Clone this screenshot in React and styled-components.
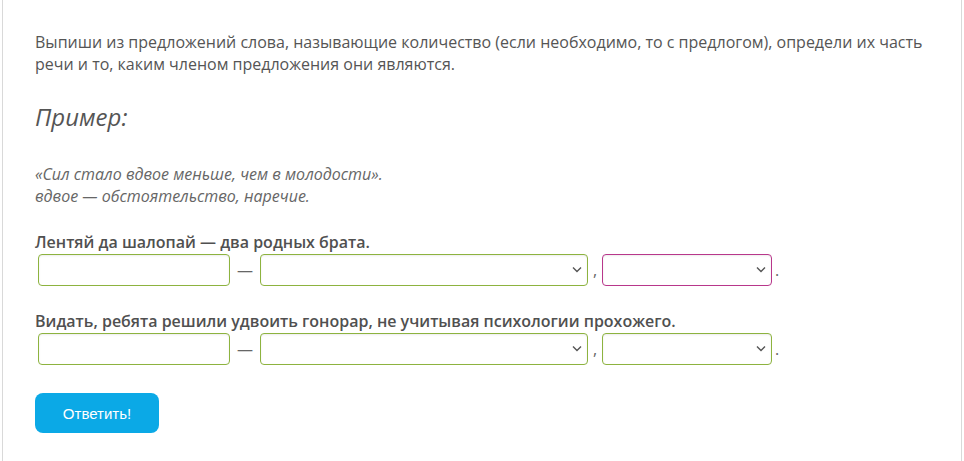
import React from "react";
import styled, { createGlobalStyle } from "styled-components";

const GlobalStyle = createGlobalStyle`
	html, body {
		margin: 0;
		padding: 0;
		background: #fff;
	}
	body {
		font-family: "Open Sans", "Noto Sans", sans-serif;
	}
`;

const Page = styled.div`
	margin: 0 2px;
	min-height: 461px;
	box-sizing: border-box;
	border-left: 1px solid #d9d9d9;
	border-right: 1px solid #d9d9d9;
	padding: 31px 32px 0 32px;
`;

const Task = styled.p`
	margin: 0;
	font-size: 16px;
	line-height: 22px;
	color: #555;
`;

const ExampleTitle = styled.h2`
	margin: 26px 0 0;
	font-size: 24px;
	line-height: 32px;
	font-weight: 400;
	font-style: italic;
	color: #555;
`;

const ExampleText = styled.p`
	margin: 30px 0 0;
	font-size: 16px;
	line-height: 22px;
	font-style: italic;
	color: #666;
`;

const Sentence = styled.div`
	margin-top: ${(p) => p.$top}px;
`;

const SentenceText = styled.div`
	font-size: 16px;
	line-height: 22px;
	font-weight: 600;
	color: #505050;
`;

const Row = styled.div`
	display: flex;
	align-items: center;
	margin-top: 1px;
	padding-left: 3px;
`;

const Sep = styled.span`
	color: #666;
	font-size: 16px;
	width: ${(p) => p.$w}px;
	text-align: center;
	flex: none;
`;

const TextInput = styled.input`
	box-sizing: border-box;
	width: 192px;
	height: 32px;
	border: 1px solid #8db33f;
	border-radius: 4px;
	box-shadow: inset 0 1px 2px rgba(0, 0, 0, 0.08);
	outline: none;
	font: inherit;
	padding: 0 8px;
	flex: none;
`;

const SelectWrap = styled.div`
	position: relative;
	width: ${(p) => p.$w}px;
	height: 32px;
	flex: none;
`;

const Select = styled.select`
	appearance: none;
	box-sizing: border-box;
	width: 100%;
	height: 100%;
	border: 1px solid ${(p) => (p.$wrong ? "#b8378b" : "#8db33f")};
	border-radius: 4px;
	box-shadow: inset 0 1px 2px rgba(0, 0, 0, 0.08);
	background: #fff;
	outline: none;
	font: inherit;
	padding: 0 8px;
`;

const Chevron = styled.svg`
	position: absolute;
	right: 6px;
	top: 12px;
	pointer-events: none;
`;

const Button = styled.button`
	margin-top: 28px;
	width: 124px;
	height: 40px;
	border: none;
	border-radius: 8px;
	background: #0ba9e6;
	color: #fff;
	font-family: "Liberation Sans", Arial, sans-serif;
	font-size: 15px;
	cursor: pointer;
`;

const Dropdown = ({ width, wrong }) => (
	<SelectWrap $w={width}>
		<Select $wrong={wrong}>
			<option></option>
		</Select>
		<Chevron width="10" height="7" viewBox="0 0 10 7">
			<path d="M1 1.5 L5 5.5 L9 1.5" fill="none" stroke="#555" strokeWidth="1.4" />
		</Chevron>
	</SelectWrap>
);

const AnswerRow = ({ wrongSecond }) => (
	<Row>
		<TextInput type="text" />
		<Sep $w={30}>—</Sep>
		<Dropdown width={328} />
		<Sep $w={14}>,</Sep>
		<Dropdown width={170} wrong={wrongSecond} />
		<Sep $w={10}>.</Sep>
	</Row>
);

export default function App() {
	return (
		<>
			<GlobalStyle />
			<Page>
				<Task>
					Выпиши из предложений слова, называющие количество (если необходимо, то с предлогом),
					определи их часть речи и то, каким членом предложения они являются.
				</Task>
				<ExampleTitle>Пример:</ExampleTitle>
				<ExampleText>
					«Сил стало вдвое меньше, чем в молодости».
					<br />
					вдвое — обстоятельство, наречие.
				</ExampleText>
				<Sentence $top={24}>
					<SentenceText>Лентяй да шалопай — два родных брата.</SentenceText>
					<AnswerRow wrongSecond />
				</Sentence>
				<Sentence $top={24}>
					<SentenceText>Видать, ребята решили удвоить гонорар, не учитывая психологии прохожего.</SentenceText>
					<AnswerRow />
				</Sentence>
				<Button>Ответить!</Button>
			</Page>
		</>
	);
}
